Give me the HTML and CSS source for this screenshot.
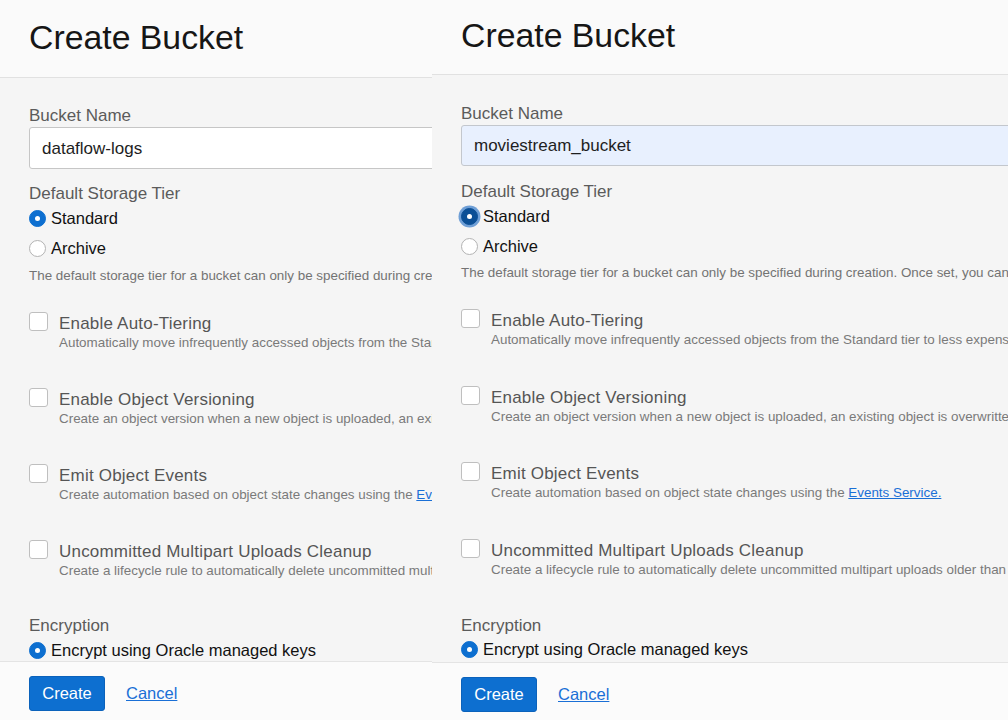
FILE: index.html
```html
<!DOCTYPE html>
<html lang="en">
<head>
<meta charset="utf-8">
<title>Create Bucket</title>
<link rel="stylesheet" href="styles.css">
</head>
<body>
<div class="screen">
  <section class="panel panel-left">
    <header class="panel-head"><h1 class="title">Create Bucket</h1></header>
    <div class="panel-body">
      <div class="field-label">Bucket Name</div>
      <div class="text-input">dataflow-logs</div>

      <div class="field-label tier-label">Default Storage Tier</div>
      <div class="radio-row"><span class="radio checked"></span><span class="radio-text">Standard</span></div>
      <div class="radio-row"><span class="radio"></span><span class="radio-text">Archive</span></div>
      <p class="help">The default storage tier for a bucket can only be specified during creation. Once set, you cannot change the storage tier in which a bucket resides.</p>

      <div class="checks">
        <div class="check-row">
          <span class="checkbox"></span>
          <div class="check-text">
            <div class="check-title">Enable Auto-Tiering</div>
            <div class="check-desc">Automatically move infrequently accessed objects from the Standard tier to less expensive storage. Learn more</div>
          </div>
        </div>
        <div class="check-row">
          <span class="checkbox"></span>
          <div class="check-text">
            <div class="check-title">Enable Object Versioning</div>
            <div class="check-desc">Create an object version when a new object is uploaded, an existing object is overwritten, or when an object is deleted. Learn more</div>
          </div>
        </div>
        <div class="check-row">
          <span class="checkbox"></span>
          <div class="check-text">
            <div class="check-title">Emit Object Events</div>
            <div class="check-desc">Create automation based on object state changes using the <a class="link" href="#">Events Service.</a></div>
          </div>
        </div>
        <div class="check-row">
          <span class="checkbox"></span>
          <div class="check-text">
            <div class="check-title">Uncommitted Multipart Uploads Cleanup</div>
            <div class="check-desc">Create a lifecycle rule to automatically delete uncommitted multipart uploads older than 7 days. Learn more</div>
          </div>
        </div>
      </div>

      <div class="field-label enc-label">Encryption</div>
      <div class="radio-row"><span class="radio checked"></span><span class="radio-text">Encrypt using Oracle managed keys</span></div>
      <div class="radio-row"><span class="radio"></span><span class="radio-text">Encrypt using customer-managed keys</span></div>
    </div>
    <footer class="panel-foot">
      <button class="btn-primary" type="button">Create</button>
      <a class="link cancel" href="#">Cancel</a>
    </footer>
  </section>

  <section class="panel panel-right">
    <header class="panel-head"><h1 class="title">Create Bucket</h1></header>
    <div class="panel-body">
      <div class="field-label">Bucket Name</div>
      <div class="text-input autofill">moviestream_bucket</div>

      <div class="field-label tier-label">Default Storage Tier</div>
      <div class="radio-row"><span class="radio checked focused"></span><span class="radio-text">Standard</span></div>
      <div class="radio-row"><span class="radio"></span><span class="radio-text">Archive</span></div>
      <p class="help">The default storage tier for a bucket can only be specified during creation. Once set, you cannot change the storage tier in which a bucket resides.</p>

      <div class="checks">
        <div class="check-row">
          <span class="checkbox"></span>
          <div class="check-text">
            <div class="check-title">Enable Auto-Tiering</div>
            <div class="check-desc">Automatically move infrequently accessed objects from the Standard tier to less expensive storage. Learn more</div>
          </div>
        </div>
        <div class="check-row">
          <span class="checkbox"></span>
          <div class="check-text">
            <div class="check-title">Enable Object Versioning</div>
            <div class="check-desc">Create an object version when a new object is uploaded, an existing object is overwritten, or when an object is deleted. Learn more</div>
          </div>
        </div>
        <div class="check-row">
          <span class="checkbox"></span>
          <div class="check-text">
            <div class="check-title">Emit Object Events</div>
            <div class="check-desc">Create automation based on object state changes using the <a class="link" href="#">Events Service.</a></div>
          </div>
        </div>
        <div class="check-row">
          <span class="checkbox"></span>
          <div class="check-text">
            <div class="check-title">Uncommitted Multipart Uploads Cleanup</div>
            <div class="check-desc">Create a lifecycle rule to automatically delete uncommitted multipart uploads older than 7 days. Learn more</div>
          </div>
        </div>
      </div>

      <div class="field-label enc-label">Encryption</div>
      <div class="radio-row"><span class="radio checked"></span><span class="radio-text">Encrypt using Oracle managed keys</span></div>
      <div class="radio-row"><span class="radio"></span><span class="radio-text">Encrypt using customer-managed keys</span></div>
    </div>
    <footer class="panel-foot">
      <button class="btn-primary" type="button">Create</button>
      <a class="link cancel" href="#">Cancel</a>
    </footer>
  </section>
</div>
</body>
</html>
```
FILE: styles.css
```css
* { box-sizing: border-box; }

html, body {
  margin: 0;
  padding: 0;
  background: #f5f5f5;
}

body {
  font-family: "Liberation Sans", Arial, Helvetica, sans-serif;
  color: #161616;
}

.screen {
  display: flex;
  width: 1008px;
  height: 720px;
  overflow: hidden;
}

.panel {
  display: flex;
  flex-direction: column;
  height: 720px;
  overflow: hidden;
  background: #f5f5f5;
}

.panel-left { width: 432px; flex: 0 0 432px; }
.panel-right { flex: 1 1 auto; min-width: 0; }

.panel-head {
  flex: 0 0 auto;
  background: #fafafa;
  border-bottom: 1px solid #e1e1e1;
  padding: 17px 0 20px 29px;
}

.title {
  margin: 0;
  font-size: 33.8px;
  line-height: 40px;
  font-weight: 400;
  color: #161616;
  white-space: nowrap;
}

.panel-body {
  flex: 1 1 auto;
  min-height: 0;
  overflow: hidden;
  padding: 28px 0 0 29px;
}

.field-label {
  font-size: 17px;
  line-height: 20px;
  color: #5b5b5b;
  margin-bottom: 1px;
  white-space: nowrap;
}

.text-input {
  width: 620px;
  height: 42px;
  border: 1px solid #c6c6c6;
  border-radius: 3px;
  background: #ffffff;
  padding: 2px 12px 0 12px;
  display: flex;
  align-items: center;
  font-size: 17px;
  color: #1e1e1e;
  white-space: nowrap;
}

.text-input.autofill {
  background: #e8f0fe;
  border-color: #c3c7cd;
}

.tier-label {
  margin-top: 15px;
  line-height: 19px;
  margin-bottom: 0;
}

.radio-row {
  display: flex;
  align-items: center;
  height: 30px;
  gap: 5px;
  white-space: nowrap;
}

.radio {
  flex: 0 0 auto;
  width: 17px;
  height: 17px;
  border-radius: 50%;
  border: 1px solid #b3b3b3;
  background: #ffffff;
  position: relative;
}

.radio.checked {
  background: #0d6fd0;
  border-color: #0d6fd0;
}

.radio.checked::after {
  content: "";
  position: absolute;
  left: 50%;
  top: 50%;
  width: 5px;
  height: 5px;
  margin: -2.5px 0 0 -2.5px;
  border-radius: 50%;
  background: #ffffff;
}

.radio.focused {
  background: #0b4f96;
  border-color: #0b4f96;
  box-shadow: 0 0 0 2.5px #6f9fd6;
}

.radio-text {
  font-size: 16.5px;
  color: #111111;
}

.help {
  margin: 4px 0 0 0;
  font-size: 13.4px;
  line-height: 18px;
  color: #737373;
  white-space: nowrap;
}

.checks {
  margin-top: 28px;
  display: flex;
  flex-direction: column;
  gap: 37px;
}

.check-row {
  display: flex;
  align-items: flex-start;
  gap: 11px;
}

.checkbox {
  flex: 0 0 auto;
  width: 19px;
  height: 19px;
  margin-top: -1px;
  border: 1px solid #bfbfbf;
  border-radius: 3px;
  background: #ffffff;
}

.check-text { white-space: nowrap; }

.check-title {
  font-size: 17px;
  letter-spacing: 0.2px;
  line-height: 21px;
  color: #555555;
}

.check-desc {
  font-size: 13.4px;
  line-height: 18px;
  color: #7a7a7a;
}

.link {
  color: #1a6fd6;
  text-decoration: underline;
}

.enc-label {
  margin-top: 36px;
  line-height: 19px;
  margin-bottom: 0;
}

.panel-foot {
  flex: 0 0 59px;
  background: #fbfbfb;
  border-top: 1px solid #e4e4e4;
  padding: 14px 0 0 29px;
  display: flex;
  align-items: flex-start;
  gap: 21px;
}

.btn-primary {
  width: 76px;
  height: 35px;
  border: 1px solid #0b62bb;
  border-radius: 3px;
  background: #0d6fd0;
  color: #ffffff;
  font-family: inherit;
  font-size: 16.5px;
  padding: 0;
  cursor: pointer;
}

.cancel {
  font-size: 16.5px;
  line-height: 35px;
  color: #1a6fd6;
}

.panel-right .panel-head { padding-top: 15px; padding-bottom: 19px; }
.panel-right .panel-body { padding-top: 29px; }
.panel-right .text-input { height: 41px; width: 700px; padding-top: 1px; }
.panel-right .tier-label { margin-top: 16px; }
.panel-right .help { margin-top: 3px; }
.panel-right .checks { gap: 37.5px; }
.panel-right .enc-label { margin-top: 37px; }
.panel-right .panel-foot { flex-basis: 58px; }
```
